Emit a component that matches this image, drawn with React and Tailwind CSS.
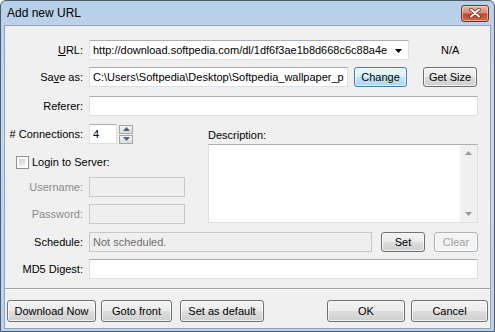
import React from 'react';

const font = "font-['Liberation_Sans',Arial,sans-serif]";

function Btn({ children, className = '', focused = false, disabled = false }) {
  const look = disabled
    ? 'border-[#adb2b5] bg-[#f4f4f4] text-[#a0a0a0]'
    : focused
      ? 'border-[#3c7fb1] bg-[linear-gradient(#eaf6fd_0%,#d9f0fc_50%,#bee6fd_50%,#a7d9f5_100%)] text-black'
      : 'border-[#707070] bg-[linear-gradient(#f2f2f2_0%,#ebebeb_50%,#dddddd_50%,#cfcfcf_100%)] text-black';
  return (
    <div
      className={`flex items-center justify-center rounded-[3px] border text-[11px] shadow-[inset_0_0_0_1px_rgba(255,255,255,0.7)] ${look} ${className}`}
    >
      {children}
    </div>
  );
}

function Field({ children, className = '', disabled = false }) {
  return (
    <div
      className={`flex items-center overflow-hidden whitespace-nowrap border text-[11px] ${
        disabled
          ? 'border-[#c8c8c8] bg-[#efefef] text-[#6d6d6d]'
          : 'border-[#dbdfe6] border-t-[#abadb3] bg-white text-black'
      } ${className}`}
    >
      {children}
    </div>
  );
}

function Label({ children, muted = false }) {
  return (
    <div className={`w-[79px] shrink-0 pr-[1px] text-right text-[11px] ${muted ? 'text-[#8b8b8b]' : 'text-black'}`}>
      {children}
    </div>
  );
}

export default function App() {
  return (
    <div className={`${font} relative flex h-[332px] w-[495px] flex-col rounded-t-[6px] border border-[#4f5b69] bg-[linear-gradient(#b7cfe8,#c6daef_30%,#bcd2ea)]`}>
      {/* Title bar */}
      <div className="flex h-[24px] shrink-0 items-center justify-between pl-[6px] pr-[5px]">
        <span className="text-[12px] text-black">Add new URL</span>
        <div className="flex h-[17px] w-[28px] items-center justify-center rounded-[3px] border border-[#6f3127] bg-[linear-gradient(#eab2a4_0%,#d98a76_45%,#c4442a_55%,#d2694d_100%)] shadow-[inset_0_0_0_1px_rgba(255,255,255,0.45)]">
          <svg width="12" height="10" viewBox="0 0 12 10">
            <path d="M2 1.5 L10 8.5 M10 1.5 L2 8.5" stroke="#5b2118" strokeWidth="3.4" strokeLinecap="round" />
            <path d="M2 1.5 L10 8.5 M10 1.5 L2 8.5" stroke="#ffffff" strokeWidth="2" strokeLinecap="round" />
          </svg>
        </div>
      </div>

      {/* Client area */}
      <div className="mx-[3px] mb-[2px] flex flex-1 flex-col border border-[#8ea3bb] bg-[#f0f0f0] pt-[14px]">
        {/* URL */}
        <div className="flex h-[20px] items-center">
          <Label>
            <span className="underline">U</span>RL:
          </Label>
          <Field className="relative ml-[5px] h-[20px] w-[320px] pl-[3px]">
            <span>http://download.softpedia.com/dl/1df6f3ae1b8d668c6c88a4e</span>
            <svg className="absolute right-[6px] top-[8px]" width="7" height="4" viewBox="0 0 7 4">
              <path d="M0 0 H7 L3.5 4 Z" fill="#000" />
            </svg>
          </Field>
          <span className="ml-[32px] text-[11px] text-black">N/A</span>
        </div>

        {/* Save as */}
        <div className="mt-[7px] flex h-[20px] items-center">
          <Label>
            Sa<span className="underline">v</span>e as:
          </Label>
          <Field className="ml-[5px] h-[20px] w-[259px] pl-[3px]">
            <span>C:\Users\Softpedia\Desktop\Softpedia_wallpaper_p</span>
          </Field>
          <Btn focused className="ml-[6px] h-[20px] w-[53px]">Change</Btn>
          <Btn className="ml-[16px] h-[20px] w-[54px]">Get Size</Btn>
        </div>

        {/* Referer */}
        <div className="mt-[9px] flex h-[20px] items-center">
          <Label>Referer:</Label>
          <Field className="ml-[5px] h-[20px] w-[389px]" />
        </div>

        {/* Middle section */}
        <div className="mt-[8px] flex">
          <div className="w-[198px] shrink-0">
            <div className="flex h-[20px] items-center">
              <Label># Connections:</Label>
              <Field className="ml-[5px] h-[20px] w-[28px] pl-[3px]">
                <span>4</span>
              </Field>
              <div className="ml-[2px] flex flex-col gap-[1px]">
                <div className="flex h-[9px] w-[14px] items-center justify-center border border-[#a6a6a6] bg-[linear-gradient(#f5f5f5,#dcdcdc)]">
                  <svg width="7" height="4" viewBox="0 0 7 4">
                    <path d="M0 4 H7 L3.5 0 Z" fill="#4b6187" />
                  </svg>
                </div>
                <div className="flex h-[9px] w-[14px] items-center justify-center border border-[#a6a6a6] bg-[linear-gradient(#f5f5f5,#dcdcdc)]">
                  <svg width="7" height="4" viewBox="0 0 7 4">
                    <path d="M0 0 H7 L3.5 4 Z" fill="#4b6187" />
                  </svg>
                </div>
              </div>
            </div>

            <div className="mt-[12px] flex h-[13px] items-center pl-[11px]">
              <div className="h-[13px] w-[13px] border border-[#8e8f8f] bg-white p-[2px]">
                <div className="h-full w-full bg-[linear-gradient(135deg,#cbcfd5,#f6f6f6)]" />
              </div>
              <span className="ml-[3px] text-[11px] text-black">Login to Server:</span>
            </div>

            <div className="mt-[8px] flex h-[20px] items-center">
              <Label muted>Username:</Label>
              <Field disabled className="ml-[5px] h-[20px] w-[96px]" />
            </div>
            <div className="mt-[7px] flex h-[20px] items-center">
              <Label muted>Password:</Label>
              <Field disabled className="ml-[5px] h-[20px] w-[96px]" />
            </div>
          </div>

          <div className="ml-[5px] flex flex-col">
            <span className="mt-[3px] h-[17px] text-[11px] text-black">Description:</span>
            <div className="flex h-[79px] w-[270px] border border-[#dbdfe6] border-t-[#abadb3] bg-white">
              <div className="flex-1" />
              <div className="flex w-[17px] flex-col items-center justify-between bg-[#f0f0f0] py-[6px]">
                <svg width="7" height="4" viewBox="0 0 7 4">
                  <path d="M0 4 H7 L3.5 0 Z" fill="#9a9a9a" />
                </svg>
                <svg width="7" height="4" viewBox="0 0 7 4">
                  <path d="M0 0 H7 L3.5 4 Z" fill="#9a9a9a" />
                </svg>
              </div>
            </div>
          </div>
        </div>

        {/* Schedule */}
        <div className="mt-[8px] flex h-[20px] items-center">
          <Label>Schedule:</Label>
          <Field disabled className="ml-[5px] h-[20px] w-[283px] pl-[3px]">
            <span>Not scheduled.</span>
          </Field>
          <Btn className="ml-[9px] h-[20px] w-[44px]">Set</Btn>
          <Btn disabled className="ml-[9px] h-[20px] w-[44px]">Clear</Btn>
        </div>

        {/* MD5 */}
        <div className="mt-[7px] flex h-[20px] items-center">
          <Label>MD5 Digest:</Label>
          <Field className="ml-[5px] h-[20px] w-[389px]" />
        </div>

        <div className="mt-[9px] border-t border-b border-t-[#a0a0a0] border-b-white" />

        {/* Bottom buttons */}
        <div className="mt-[10px] flex h-[22px] items-center pl-[2px]">
          <Btn className="h-[22px] w-[89px]">Download Now</Btn>
          <Btn className="ml-[5px] h-[22px] w-[71px]">Goto front</Btn>
          <Btn className="ml-[8px] h-[22px] w-[84px]">Set as default</Btn>
          <Btn className="ml-[63px] h-[22px] w-[78px]">OK</Btn>
          <Btn className="ml-[6px] h-[22px] w-[77px]">Cancel</Btn>
        </div>
      </div>
    </div>
  );
}
